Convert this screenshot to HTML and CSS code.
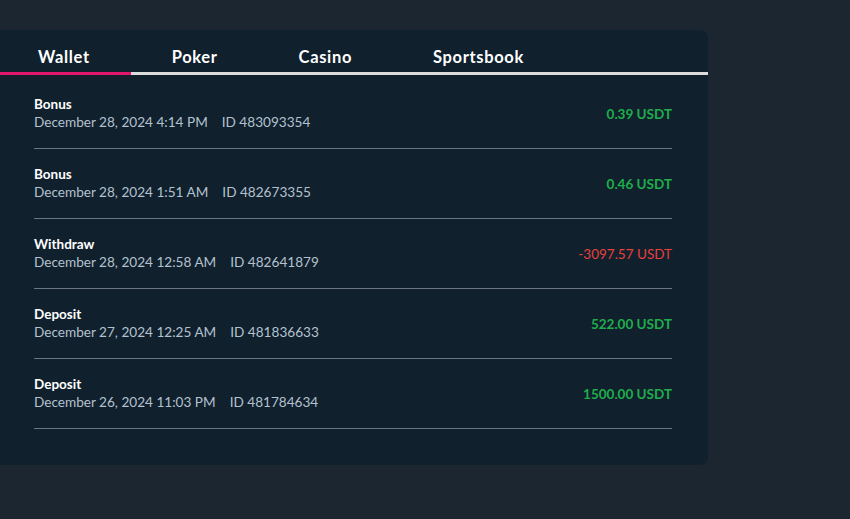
FILE: index.html
```html
<!DOCTYPE html>
<html>
<head>
<meta charset="utf-8">
<link rel="stylesheet" href="styles.css">
</head>
<body>
<div class="page">
  <div class="panel">
    <nav class="tabs">
      <div class="tab active">Wallet</div>
      <div class="tab">Poker</div>
      <div class="tab">Casino</div>
      <div class="tab">Sportsbook</div>
      <div class="tab-rest"></div>
    </nav>
    <ul class="list">
      <li class="row">
        <div class="info"><div class="title">Bonus</div><div class="meta"><span>December 28, 2024 4:14 PM</span><span>ID 483093354</span></div></div>
        <div class="amount pos">0.39 USDT</div>
      </li>
      <li class="row">
        <div class="info"><div class="title">Bonus</div><div class="meta"><span>December 28, 2024 1:51 AM</span><span>ID 482673355</span></div></div>
        <div class="amount pos">0.46 USDT</div>
      </li>
      <li class="row">
        <div class="info"><div class="title">Withdraw</div><div class="meta"><span>December 28, 2024 12:58 AM</span><span>ID 482641879</span></div></div>
        <div class="amount neg">-3097.57 USDT</div>
      </li>
      <li class="row">
        <div class="info"><div class="title">Deposit</div><div class="meta"><span>December 27, 2024 12:25 AM</span><span>ID 481836633</span></div></div>
        <div class="amount pos">522.00 USDT</div>
      </li>
      <li class="row">
        <div class="info"><div class="title">Deposit</div><div class="meta"><span>December 26, 2024 11:03 PM</span><span>ID 481784634</span></div></div>
        <div class="amount pos">1500.00 USDT</div>
      </li>
    </ul>
  </div>
</div>
</body>
</html>
```

FILE: styles.css
```css
* { box-sizing: border-box; }
html, body { margin: 0; padding: 0; }
body {
  background: #1b2631;
  font-family: Lato, "Noto Sans", sans-serif;
  width: 850px;
  height: 519px;
  overflow: hidden;
}
.page { padding-top: 30px; }
.panel {
  width: 708px;
  height: 435px;
  background: #10202d;
  border-radius: 0 8px 8px 0;
}
.tabs {
  display: flex;
  height: 45px;
}
.tab {
  padding: 17px 40px 0 38px;
  color: #ffffff;
  font-weight: 700;
  font-size: 16.5px;
  letter-spacing: 0.65px;
  border-bottom: 3px solid #dcdcdc;
}
.tab + .tab { padding-left: 41px; padding-right: 40px; }
.tab.active { border-bottom-color: #e0176b; padding-right: 41px; }
.tab-rest { flex: 1; border-bottom: 3px solid #dcdcdc; }
.list {
  list-style: none;
  margin: 0;
  padding: 4px 36px 0 34px;
}
.row {
  display: flex;
  align-items: center;
  justify-content: space-between;
  height: 70px;
  border-bottom: 1px solid #6b7680;
}
.title {
  color: #ffffff;
  font-weight: 700;
  font-size: 13.5px;
  line-height: 17px;
}
.meta {
  display: flex;
  gap: 14px;
  color: #b4c2d0;
  font-size: 13.6px;
  line-height: 19px;
}
.amount {
  font-size: 13.5px;
  font-weight: 700;
}
.amount.pos { color: #1fae4b; }
.amount.neg { color: #e8413c; font-weight: 400; }
```
